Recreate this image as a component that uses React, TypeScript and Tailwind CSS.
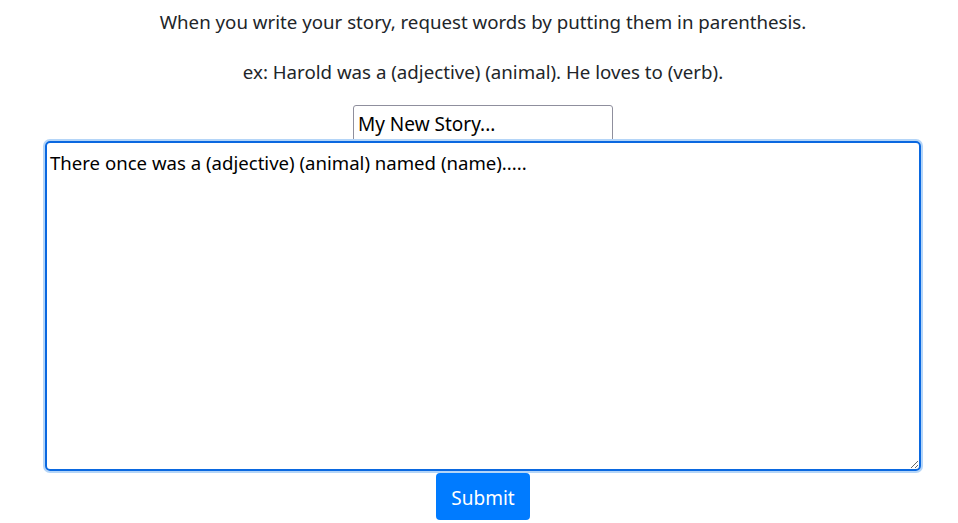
import { useState } from "react";

const font = { fontFamily: '"Noto Sans", "Open Sans", sans-serif' };

const StoryForm = () => {
  const [title, setTitle] = useState("My New Story...");
  const [story, setStory] = useState(
    "There once was a (adjective) (animal) named (name)....."
  );

  return (
    <div className="flex flex-col items-center pl-2 pt-[10px] text-[#212529]" style={font}>
      {/* Instructions */}
      <p className="text-[18.7px] leading-6">
        When you write your story, request words by putting them in parenthesis.
      </p>
      <p className="mt-[26px] text-[18.7px] leading-6">
        ex: Harold was a (adjective) (animal). He loves to (verb).
      </p>

      {/* Title + story */}
      <input
        value={title}
        onChange={(e) => setTitle(e.target.value)}
        className="mt-[21px] h-[37px] w-[260px] rounded-t-[3px] border border-[#8f8f9d] px-[4px] text-[19px] text-black outline-none"
        style={font}
      />
      <textarea
        autoFocus
        value={story}
        onChange={(e) => setStory(e.target.value)}
        className="mt-[-1px] h-[330px] w-[876px] rounded-[5px] border-2 border-[#0a68e0] px-[3px] py-[8px] text-[18.6px] leading-[24px] text-black shadow-[0_0_0_2px_#b4d5f8] outline-none"
        style={font}
      />
      <button className="mt-[2px] h-[47px] w-[94px] rounded-[4px] bg-[#007bff] pt-[3px] text-[19px] text-white">
        Submit
      </button>
    </div>
  );
};

export default function App() {
  return <StoryForm />;
}
